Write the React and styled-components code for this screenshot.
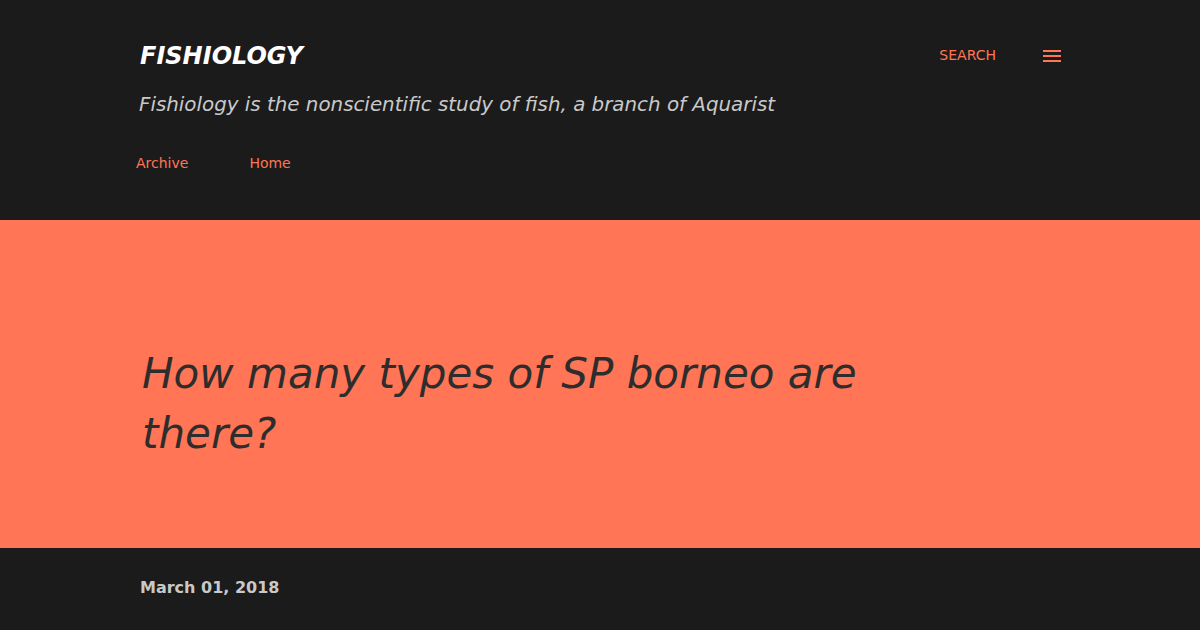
import React from 'react';
import styled, { createGlobalStyle } from 'styled-components';

const GlobalStyle = createGlobalStyle`
  html, body {
    margin: 0;
    padding: 0;
    background: #1b1b1b;
    font-family: 'DejaVu Sans', 'Liberation Sans', sans-serif;
  }
`;

const Page = styled.div`
  width: 1200px;
  height: 630px;
  overflow: hidden;
  background: #1b1b1b;
`;

const Header = styled.header`
  height: 220px;
  box-sizing: border-box;
  padding: 41px 140px 0;
`;

const TopRow = styled.div`
  display: flex;
  align-items: center;
  height: 30px;
`;

const BlogTitle = styled.h1`
  margin: 0;
  flex: 1;
  font-size: 24px;
  font-weight: bold;
  font-style: italic;
  color: #ffffff;
`;

const SearchLink = styled.a`
  font-size: 14px;
  color: #ff7654;
  text-transform: uppercase;
  margin: 0 44px 2px 0;
`;

const MenuButton = styled.button`
  border: 0;
  background: none;
  padding: 0;
  width: 24px;
  height: 24px;
  display: flex;
  align-items: center;
  justify-content: center;
  margin: 0 -4px 0 0;
`;

const Tagline = styled.p`
  margin: 22px 0 0 -1px;
  font-size: 19.85px;
  font-style: italic;
  color: #c9c9c9;
`;

const Nav = styled.nav`
  display: flex;
  gap: 61px;
  margin: 39px 0 0 -4px;
`;

const NavLink = styled.a`
  font-size: 14px;
  color: #ff7654;
`;

const Hero = styled.section`
  background: #ff7555;
  height: 328px;
  display: flex;
  align-items: center;
  padding: 0 140px;
`;

const PostTitle = styled.h2`
  margin: 40px 0 0 2px;
  max-width: 740px;
  font-size: 42px;
  font-weight: normal;
  font-style: italic;
  line-height: 60px;
  color: #2d2d2d;
`;

const Meta = styled.div`
  padding: 30px 140px 0;
  font-size: 16px;
  font-weight: bold;
  color: #c9c9c9;
`;

const MenuIcon = () => (
  <svg width="18" height="12" viewBox="0 0 18 12">
    <rect x="0" y="0" width="18" height="2" fill="#ff7654" />
    <rect x="0" y="5" width="18" height="2" fill="#ff7654" />
    <rect x="0" y="10" width="18" height="2" fill="#ff7654" />
  </svg>
);

export default function App() {
  return (
    <Page>
      <GlobalStyle />
      <Header>
        <TopRow>
          <BlogTitle>FISHIOLOGY</BlogTitle>
          <SearchLink>Search</SearchLink>
          <MenuButton aria-label="menu">
            <MenuIcon />
          </MenuButton>
        </TopRow>
        <Tagline>Fishiology is the nonscientific study of fish, a branch of Aquarist</Tagline>
        <Nav>
          <NavLink>Archive</NavLink>
          <NavLink>Home</NavLink>
        </Nav>
      </Header>
      <Hero>
        <PostTitle>How many types of SP borneo are there?</PostTitle>
      </Hero>
      <Meta>March 01, 2018</Meta>
    </Page>
  );
}
